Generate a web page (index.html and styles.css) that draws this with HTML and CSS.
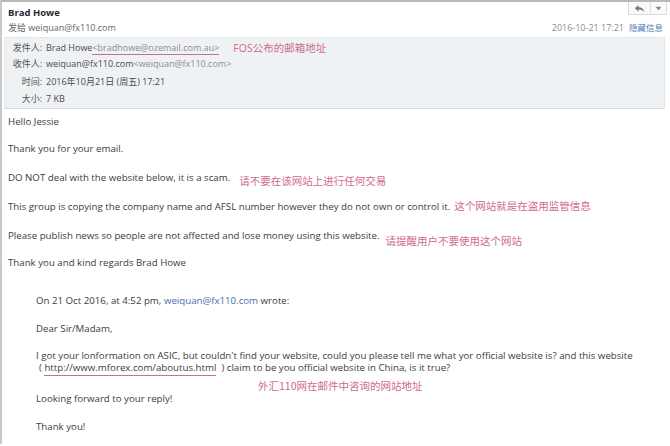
FILE: index.html
```html
<!DOCTYPE html>
<html>
<head>
<meta charset="utf-8">
<link rel="stylesheet" href="styles.css">
</head>
<body>
<div class="frame">
  <div class="head-row1">
    <div class="sender-name">Brad Howe</div>
    <div class="btn-group">
      <span class="btn btn-reply"><svg width="11" height="9" viewBox="0 0 11 9"><path d="M4.5 1 L0.8 4.2 L4.5 7.4 V5.4 C7 5.3 9 6.2 10.4 8.2 C9.8 5.2 7.8 3.2 4.5 3 Z" fill="#7a7a7a"/></svg></span>
      <span class="btn btn-more"><svg width="7" height="5" viewBox="0 0 7 5"><path d="M0.5 0.8 H6.5 L3.5 4.4 Z" fill="#8a8a8a"/></svg></span>
    </div>
  </div>
  <div class="head-row2">
    <div class="to-line">发给 weiquan@fx110.com</div>
    <div class="meta"><span class="date">2016-10-21 17:21</span><span class="hide-link">隐藏信息</span></div>
  </div>
  <div class="info-box">
    <div class="info-row r1"><span class="label">发件人:</span><span class="value">Brad Howe<span class="mark-line"><span class="addr">&lt;bradhowe@ozemail.com.au&gt;</span></span></span><span class="note note-fos">FOS公布的邮箱地址</span></div>
    <div class="info-row r2"><span class="label">收件人:</span><span class="value">weiquan@fx110.com<span class="addr">&lt;weiquan@fx110.com&gt;</span></span></div>
    <div class="info-row r3"><span class="label">时间:</span><span class="value">2016年10月21日 (周五) 17:21</span></div>
    <div class="info-row r4"><span class="label">大小:</span><span class="value">7 KB</span></div>
  </div>
  <div class="mail-body">
    <p>Hello Jessie</p>
    <p>Thank you for your email.</p>
    <p>DO NOT deal with the website below, it is a scam.<span class="note note-a">请不要在该网站上进行任何交易</span></p>
    <p>This group is copying the company name and AFSL number however they do not own or control it.<span class="note note-b">这个网站就是在盗用监管信息</span></p>
    <p>Please publish news so people are not affected and lose money using this website.<span class="note note-c">请提醒用户不要使用这个网站</span></p>
    <p>Thank you and kind regards Brad Howe</p>
    <div class="quote">
      <p>On 21 Oct 2016, at 4:52 pm, <span class="link">weiquan@fx110.com</span> wrote:</p>
      <p>Dear Sir/Madam,</p>
      <p class="tight">I got your lonformation on ASIC, but couldn't find your website, could you please tell me what yor official website is? and this website<br><span class="paren">( <span class="mark-line url">http://www.mforex.com/aboutus.html</span> &nbsp;)</span> claim to be you official website in China, is it true?</p>
      <div class="note note-d">外汇110网在邮件中咨询的网站地址</div>
      <p class="after-note">Looking forward to your reply!</p>
      <p>Thank you!</p>
    </div>
  </div>
</div>
</body>
</html>
```

FILE: styles.css
```css
html, body {
  margin: 0;
  padding: 0;
  background: #ffffff;
}
body {
  font-family: "Open Sans", "Noto Sans CJK SC", sans-serif;
  font-size: 9px;
  color: #3c3c3c;
  width: 670px;
  height: 446px;
  overflow: hidden;
}
.frame {
  border-top: 2px solid #b9b9b9;
  border-left: 2px solid #c9c9c9;
  height: 444px;
  box-sizing: border-box;
}
.head-row1 {
  display: flex;
  justify-content: space-between;
  align-items: flex-start;
  height: 17.5px;
  padding-left: 6px;
  padding-right: 3px;
}
.sender-name {
  font-weight: 700;
  font-size: 9.5px;
  color: #2a2a2a;
  line-height: 15px;
  margin-top: 3px;
}
.btn-group {
  display: flex;
  border: 1px solid #dcdcdc;
  border-top: none;
  height: 12px;
  background: #fafafa;
}
.btn {
  display: flex;
  align-items: center;
  justify-content: center;
  height: 12px;
}
.btn-reply {
  width: 21px;
  border-right: 1px solid #e0e0e0;
}
.btn-more {
  width: 15px;
}
.head-row2 {
  display: flex;
  justify-content: space-between;
  line-height: 15px;
  padding-left: 6px;
  padding-right: 7px;
  color: #666;
}
.meta {
  color: #8a8a8a;
  font-size: 9px;
}
.hide-link {
  color: #4f7db5;
  margin-left: 5px;
  font-size: 8.5px;
}
.info-box {
  margin: 2.5px 5px 0 2px;
  background: #eff2f4;
  border: 1px solid #e4e7ea;
  border-bottom-color: #d9dcdf;
  padding: 2px 0 2px 0;
  height: 72px;
  box-sizing: border-box;
}
.info-row {
  display: flex;
  align-items: center;
  line-height: 16px;
  color: #4a4a4a;
}
.r3 { margin-top: 2px; }
.r4 { margin-top: 1px; }
.label {
  width: 37px;
  text-align: right;
  padding-right: 4px;
  color: #555;
}
.addr {
  color: #8d8d8d;
}
.mark-line {
  border-bottom: 1.5px solid #c9708a;
  padding-bottom: 0;
  display: inline-block;
  line-height: 13px;
}
.note {
  font-family: "Noto Sans CJK SC", sans-serif;
  color: #d06a88;
  font-size: 10.5px;
  position: relative;
}
.note-fos {
  margin-left: 14px;
  font-family: "Open Sans", "Noto Sans CJK SC", sans-serif;
  font-size: 10.5px;
}
.mail-body {
  padding-left: 6px;
  padding-top: 5.5px;
  font-size: 9.7px;
}
.mail-body p {
  margin: 0 0 13.8px 0;
  line-height: 14px;
}
.note-a {
  margin-left: 9px;
  top: 4px;
}
.note-b {
  margin-left: 4px;
}
.note-c {
  margin-left: 6px;
  top: 6px;
}
.quote {
  margin-top: 23.7px;
  padding-left: 28px;
}
.quote p.tight {
  line-height: 12px;
  margin-bottom: 0;
}
.paren {
  margin-left: 3px;
}
.url {
  line-height: 12px;
  padding-bottom: 1px;
}
.link {
  color: #4670a8;
}
.note-d {
  margin: 3px 0 0 222px;
  line-height: 14px;
}
.quote p.after-note {
  margin-top: -1px;
}
```
